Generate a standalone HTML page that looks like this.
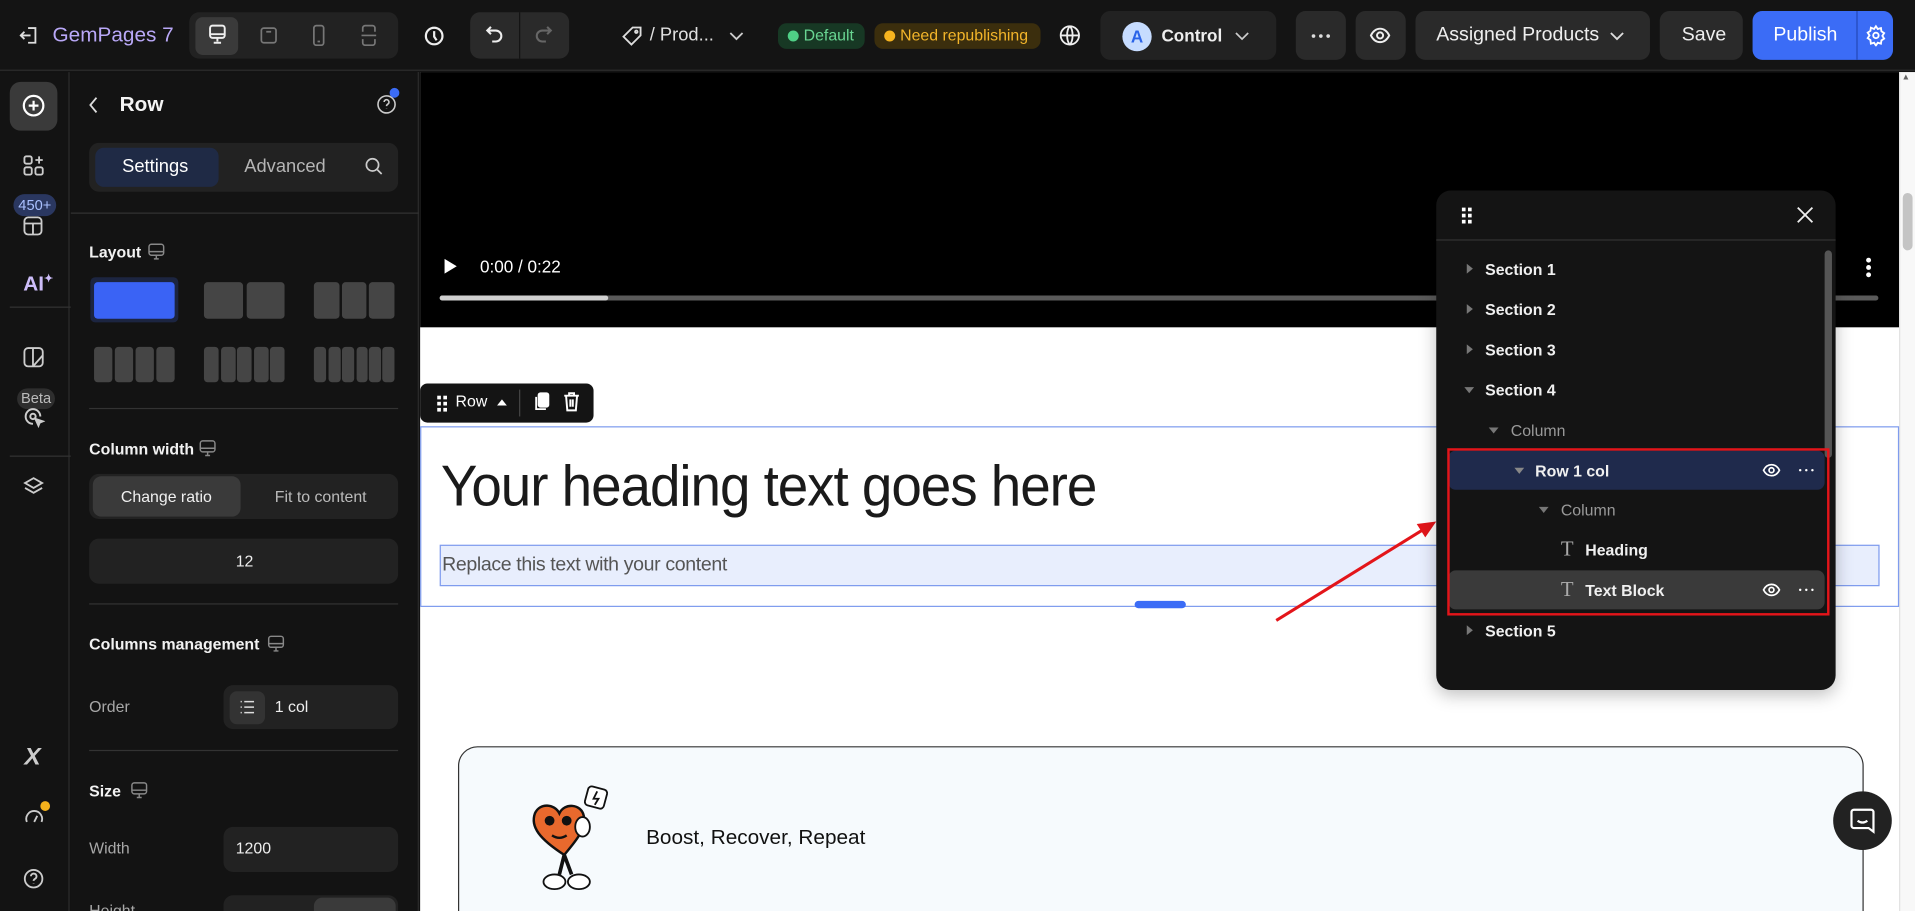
<!DOCTYPE html>
<html><head><meta charset="utf-8"><style>
*{box-sizing:border-box;margin:0;padding:0}
html,body{width:1915px;height:911px;overflow:hidden;background:#111}
#w{position:absolute;left:0;top:0;width:1568px;height:746px;overflow:hidden;transform:scale(1.22130);transform-origin:0 0;font-family:"Liberation Sans",sans-serif;color:#fff;background:#131313}
.a{position:absolute}
.t{position:absolute;white-space:nowrap}
.btn{position:absolute;background:#262626;border-radius:8px}
.ic{position:absolute}
.lbl{font-size:13px;font-weight:bold;color:#f2f2f2}
.gr{color:#a8a8a8;font-size:13px}
.tile{position:absolute;background:#454545;border-radius:3px}
.div{position:absolute;left:73px;width:253px;height:1px;background:#333}
.row{position:absolute;left:1186px;width:308px;height:32px;font-size:13px;font-weight:bold;color:#f0f0f0}
.row span{position:absolute;top:9px}
.tri{position:absolute;width:0;height:0}
</style></head><body><div id="w">
<!-- top bar -->
<div class="a" style="left:0;top:0;width:1568px;height:58px;background:#141414;border-bottom:1px solid #2c2c2c"></div>
<svg class="ic" style="left:16px;top:21px" width="16" height="16" viewBox="0 0 16 16" fill="none" stroke="#ddd" stroke-width="1.5"><path d="M7 2h6v12H7M1 8h8M4 5L1 8l3 3"/></svg>
<div class="t" style="left:43px;top:19px;font-size:17px;color:#b9a8f7">GemPages 7</div>
<div class="a" style="left:155px;top:10px;width:171px;height:38px;background:#222;border-radius:8px"></div>
<div class="a" style="left:160px;top:14px;width:35px;height:31px;background:#3a3a3a;border-radius:6px"></div>
<svg class="ic" style="left:170px;top:20px" width="16" height="18" viewBox="0 0 16 18" fill="none" stroke="#eee" stroke-width="1.6"><rect x="2" y="1" width="12" height="10" rx="2"/><path d="M2 8h12M8 11v3M5 15h6"/></svg>
<svg class="ic" style="left:212px;top:21px" width="16" height="16" viewBox="0 0 16 16" fill="none" stroke="#777" stroke-width="1.4"><rect x="2" y="2" width="12" height="12" rx="2"/><path d="M6 5h4"/></svg>
<svg class="ic" style="left:255px;top:20px" width="12" height="18" viewBox="0 0 12 18" fill="none" stroke="#777" stroke-width="1.4"><rect x="2" y="1" width="8" height="16" rx="2"/><path d="M5 14h2"/></svg>
<svg class="ic" style="left:294px;top:20px" width="16" height="18" viewBox="0 0 16 18" fill="none" stroke="#777" stroke-width="1.4"><path d="M3 6V3a2 2 0 012-2h6a2 2 0 012 2v3M3 12v3a2 2 0 002 2h6a2 2 0 002-2v-3M2 9h12"/></svg>
<svg class="ic" style="left:347px;top:21px" width="17" height="17" viewBox="0 0 17 17" fill="none" stroke="#eee" stroke-width="1.8"><circle cx="8.5" cy="8.5" r="6.8"/><path d="M8.5 4.5v4.5l2 3"/></svg>
<div class="a" style="left:385px;top:10px;width:81px;height:38px;background:#2a2a2a;border-radius:8px"></div>
<div class="a" style="left:425px;top:10px;width:1px;height:38px;background:#141414"></div>
<svg class="ic" style="left:397px;top:20px" width="16" height="18" viewBox="0 0 16 18" fill="none" stroke="#eee" stroke-width="1.7"><path d="M5 2L2 5l3 3M2 5h7a4.5 4.5 0 010 9H6"/></svg>
<svg class="ic" style="left:437px;top:20px" width="16" height="18" viewBox="0 0 16 18" fill="none" stroke="#666" stroke-width="1.7"><path d="M11 2l3 3-3 3M14 5H7a4.5 4.5 0 000 9h3"/></svg>
<svg class="ic" style="left:509px;top:21px" width="17" height="17" viewBox="0 0 17 17" fill="none" stroke="#ddd" stroke-width="1.5"><path d="M9 1.5h6.5V8L8 15.5 1.5 9z"/><circle cx="12" cy="5" r="1"/></svg>
<div class="t" style="left:532px;top:20px;font-size:15px;color:#e0e0e0">/ Prod...</div>
<svg class="ic" style="left:596px;top:26px" width="14" height="8" viewBox="0 0 14 8" fill="none" stroke="#ccc" stroke-width="1.5"><path d="M2 1l5 5 5-5"/></svg>
<div class="a" style="left:637px;top:19px;width:71px;height:21px;background:#173824;border-radius:7px"></div>
<div class="a" style="left:645px;top:25px;width:9px;height:9px;border-radius:50%;background:#4fcf86"></div>
<div class="t" style="left:658px;top:21px;font-size:13px;color:#69d592">Default</div>
<div class="a" style="left:716px;top:19px;width:136px;height:21px;background:#3b2e0d;border-radius:7px"></div>
<div class="a" style="left:724px;top:25px;width:9px;height:9px;border-radius:50%;background:#f6b41f"></div>
<div class="t" style="left:737px;top:21px;font-size:13px;color:#f3b52a">Need republishing</div>
<svg class="ic" style="left:867px;top:20px" width="18" height="18" viewBox="0 0 18 18" fill="none" stroke="#eee" stroke-width="1.5"><circle cx="9" cy="9" r="7.5"/><path d="M1.5 9h15M9 1.5c-3 3-3 12 0 15M9 1.5c3 3 3 12 0 15"/></svg>
<div class="btn" style="left:901px;top:9px;width:144px;height:40px;background:#222"></div>
<div class="a" style="left:919px;top:18px;width:24px;height:24px;border-radius:50%;background:#c6dcff;color:#2a63e8;font-size:14px;font-weight:bold;text-align:center;line-height:24px">A</div>
<div class="t" style="left:951px;top:21px;font-size:14px;font-weight:bold;color:#eee">Control</div>
<svg class="ic" style="left:1011px;top:26px" width="12" height="8" viewBox="0 0 12 8" fill="none" stroke="#ccc" stroke-width="1.4"><path d="M1 1l5 5 5-5"/></svg>
<div class="btn" style="left:1061px;top:9px;width:41px;height:40px;background:#2a2a2a"></div>
<div class="a" style="left:1074px;top:28px;width:3px;height:3px;border-radius:50%;background:#ddd;box-shadow:6px 0 #ddd,12px 0 #ddd"></div>
<div class="btn" style="left:1110px;top:9px;width:41px;height:40px;background:#2a2a2a"></div>
<svg class="ic" style="left:1121px;top:20px" width="18" height="18" viewBox="0 0 18 18" fill="none" stroke="#eee" stroke-width="1.6"><path d="M1.5 9c2-4 4.5-5.5 7.5-5.5S14.5 5 16.5 9c-2 4-4.5 5.5-7.5 5.5S3.5 13 1.5 9z"/><circle cx="9" cy="9" r="2.5"/></svg>
<div class="btn" style="left:1159px;top:9px;width:192px;height:40px;background:#2a2a2a"></div>
<div class="t" style="left:1176px;top:20px;font-size:16px;color:#eee">Assigned Products</div>
<svg class="ic" style="left:1317px;top:26px" width="14" height="8" viewBox="0 0 14 8" fill="none" stroke="#ddd" stroke-width="1.5"><path d="M2 1l5 5 5-5"/></svg>
<div class="btn" style="left:1359px;top:9px;width:68px;height:40px;background:#2a2a2a"></div>
<div class="t" style="left:1377px;top:20px;font-size:16px;color:#eee">Save</div>
<div class="a" style="left:1435px;top:9px;width:115px;height:40px;background:#3b6cf6;border-radius:8px"></div>
<div class="a" style="left:1520px;top:9px;width:1px;height:40px;background:#2449b8"></div>
<div class="t" style="left:1452px;top:20px;font-size:16px;color:#fff">Publish</div>
<svg class="ic" style="left:1527px;top:20px" width="18" height="18" viewBox="0 0 24 24" fill="none" stroke="#fff" stroke-width="2"><circle cx="12" cy="12" r="3"/><path d="M12 2l2 3 3.5-1 .5 3.5 3 2-2 3 2 3-3 2-.5 3.5-3.5-1-2 3-2-3-3.5 1L6 17l-3-2 2-3-2-3 3-2 .5-3.5L10 5z"/></svg>

<!-- left rail -->
<div class="a" style="left:0;top:59px;width:57px;height:687px;background:#131313;border-right:1px solid #2c2c2c"></div>
<div class="a" style="left:8px;top:67px;width:39px;height:40px;background:#3a3a3a;border-radius:9px"></div>
<svg class="ic" style="left:18px;top:77px" width="19" height="19" viewBox="0 0 19 19" fill="none" stroke="#fff" stroke-width="1.8"><circle cx="9.5" cy="9.5" r="8"/><path d="M9.5 5.5v8M5.5 9.5h8"/></svg>
<svg class="ic" style="left:19px;top:127px" width="17" height="17" viewBox="0 0 17 17" fill="none" stroke="#ccc" stroke-width="1.5"><rect x="1" y="1" width="6" height="6" rx="1.5"/><rect x="1" y="10" width="6" height="6" rx="1.5"/><rect x="10" y="10" width="6" height="6" rx="1.5"/><path d="M13 1v6M10 4h6"/></svg>
<div class="a" style="left:11px;top:159px;width:35px;height:18px;border-radius:9px;background:#2a3760;color:#a9c0ff;font-size:12px;text-align:center;line-height:18px">450+</div>
<svg class="ic" style="left:19px;top:177px" width="16" height="16" viewBox="0 0 16 16" fill="none" stroke="#ccc" stroke-width="1.5"><rect x="1" y="1" width="14" height="14" rx="3"/><path d="M1 6h14M8 6v9"/></svg>
<div class="t" style="left:19px;top:223px;font-size:17px;font-weight:bold;color:#cdbdf9">AI<span style="font-size:9px;vertical-align:top">✦</span></div>
<div class="a" style="left:8px;top:251px;width:50px;height:1px;background:#333"></div>
<svg class="ic" style="left:19px;top:284px" width="17" height="17" viewBox="0 0 17 17" fill="none" stroke="#ccc" stroke-width="1.5"><rect x="1" y="1" width="15" height="15" rx="3"/><path d="M8 1v15M8 16l8-9"/></svg>
<div class="a" style="top:318px;height:17px;border-radius:9px;background:#2e2e2e;color:#bbb;font-size:12px;text-align:center;line-height:17px;left:14px;width:31px">Beta</div>
<svg class="ic" style="left:19px;top:333px" width="18" height="18" viewBox="0 0 18 18" fill="none" stroke="#ccc" stroke-width="1.6"><path d="M14 8A6 6 0 108 14"/><circle cx="8" cy="8" r="2.2"/><path d="M10 10l6 2-2.5 1-1 2.5z" fill="#ccc"/></svg>
<div class="a" style="left:8px;top:373px;width:50px;height:1px;background:#333"></div>
<svg class="ic" style="left:19px;top:390px" width="17" height="17" viewBox="0 0 17 17" fill="none" stroke="#ccc" stroke-width="1.5"><path d="M8.5 1.5l7 4-7 4-7-4z"/><path d="M1.5 9.5l7 4 7-4"/></svg>
<div class="t" style="left:20px;top:609px;font-size:20px;font-weight:bold;color:#ccc;font-style:italic">X</div>
<svg class="ic" style="left:20px;top:661px" width="16" height="14" viewBox="0 0 16 14" fill="none" stroke="#ccc" stroke-width="1.5"><path d="M2 12A6.5 6.5 0 1114 12M8 12l2.5-5"/></svg>
<div class="a" style="left:33px;top:656px;width:8px;height:8px;border-radius:50%;background:#f5b21c"></div>
<svg class="ic" style="left:19px;top:711px" width="17" height="17" viewBox="0 0 17 17" fill="none" stroke="#ccc" stroke-width="1.5"><circle cx="8.5" cy="8.5" r="7.2"/><path d="M6.3 6.5a2.3 2.3 0 114 1.6c-.9.7-1.8 1-1.8 2.2M8.5 12.5v.3"/></svg>

<!-- settings panel -->
<div class="a" style="left:58px;top:59px;width:285px;height:687px;background:#131313;border-right:1px solid #2c2c2c"></div>
<svg class="ic" style="left:72px;top:79px" width="10" height="14" viewBox="0 0 10 14" fill="none" stroke="#ddd" stroke-width="1.5"><path d="M7 1L2 7l5 6"/></svg>
<div class="t" style="left:98px;top:76px;font-size:17px;font-weight:bold;color:#f4f4f4">Row</div>
<svg class="ic" style="left:308px;top:77px" width="17" height="17" viewBox="0 0 17 17" fill="none" stroke="#ccc" stroke-width="1.3"><circle cx="8.5" cy="8.5" r="7"/><path d="M6.5 6.5a2 2 0 113.5 1.4c-.8.6-1.5.9-1.5 2M8.5 12v.3"/></svg>
<div class="a" style="left:319px;top:72px;width:8px;height:8px;border-radius:50%;background:#3b6cf6"></div>
<div class="a" style="left:73px;top:117px;width:253px;height:40px;background:#222;border-radius:8px"></div>
<div class="a" style="left:78px;top:121px;width:101px;height:32px;background:#1f2a45;border-radius:7px"></div>
<div class="t" style="left:100px;top:128px;font-size:15px;color:#fff">Settings</div>
<div class="t" style="left:200px;top:128px;font-size:15px;color:#b5b5b5">Advanced</div>
<svg class="ic" style="left:298px;top:128px" width="16" height="16" viewBox="0 0 16 16" fill="none" stroke="#ccc" stroke-width="1.4"><circle cx="7" cy="7" r="5"/><path d="M11 11l3.5 3.5"/></svg>
<div class="a" style="left:58px;top:174px;width:285px;height:1px;background:#333"></div>
<div class="t lbl" style="left:73px;top:199px">Layout</div>
<svg class="ic" style="left:121px;top:199px" width="14" height="14" viewBox="0 0 14 14" fill="none" stroke="#888" stroke-width="1.2"><rect x="1" y="1" width="12" height="9" rx="2"/><path d="M1 7h12M5 13h4M7 10v3"/></svg>
<div class="a" style="left:74px;top:227px;width:72px;height:37px;border-radius:4px;background:#1c2541"></div>
<div class="a" style="left:77px;top:231px;width:66px;height:30px;border-radius:3px;background:#3a63f5"></div>
<div class="tile" style="left:167px;top:231px;width:32px;height:30px"></div><div class="tile" style="left:202px;top:231px;width:31px;height:30px"></div>
<div class="tile" style="left:257px;top:231px;width:21px;height:30px"></div><div class="tile" style="left:280px;top:231px;width:20px;height:30px"></div><div class="tile" style="left:302px;top:231px;width:21px;height:30px"></div>
<div class="tile" style="left:77px;top:284px;width:15px;height:29px"></div><div class="tile" style="left:94px;top:284px;width:15px;height:29px"></div><div class="tile" style="left:111px;top:284px;width:15px;height:29px"></div><div class="tile" style="left:128px;top:284px;width:15px;height:29px"></div>
<div class="tile" style="left:167px;top:284px;width:12px;height:29px"></div><div class="tile" style="left:181px;top:284px;width:12px;height:29px"></div><div class="tile" style="left:194px;top:284px;width:12px;height:29px"></div><div class="tile" style="left:208px;top:284px;width:12px;height:29px"></div><div class="tile" style="left:221px;top:284px;width:12px;height:29px"></div>
<div class="tile" style="left:257px;top:284px;width:10px;height:29px"></div><div class="tile" style="left:269px;top:284px;width:10px;height:29px"></div><div class="tile" style="left:280px;top:284px;width:10px;height:29px"></div><div class="tile" style="left:292px;top:284px;width:9px;height:29px"></div><div class="tile" style="left:302px;top:284px;width:10px;height:29px"></div><div class="tile" style="left:313px;top:284px;width:10px;height:29px"></div>
<div class="div" style="top:334px"></div>
<div class="t lbl" style="left:73px;top:360px">Column width</div>
<svg class="ic" style="left:163px;top:360px" width="14" height="14" viewBox="0 0 14 14" fill="none" stroke="#888" stroke-width="1.2"><rect x="1" y="1" width="12" height="9" rx="2"/><path d="M1 7h12M5 13h4M7 10v3"/></svg>
<div class="a" style="left:73px;top:388px;width:253px;height:37px;background:#222;border-radius:8px"></div>
<div class="a" style="left:76px;top:390px;width:121px;height:33px;background:#3a3a3a;border-radius:7px"></div>
<div class="t" style="left:99px;top:399px;font-size:13px;color:#f0f0f0">Change ratio</div>
<div class="t" style="left:225px;top:399px;font-size:13px;color:#bbb">Fit to content</div>
<div class="a" style="left:73px;top:441px;width:253px;height:37px;background:#222;border-radius:8px"></div>
<div class="t" style="left:193px;top:452px;font-size:13px;color:#eee">12</div>
<div class="div" style="top:494px"></div>
<div class="t lbl" style="left:73px;top:520px">Columns management</div>
<svg class="ic" style="left:219px;top:520px" width="14" height="14" viewBox="0 0 14 14" fill="none" stroke="#888" stroke-width="1.2"><rect x="1" y="1" width="12" height="9" rx="2"/><path d="M1 7h12M5 13h4M7 10v3"/></svg>
<div class="t gr" style="left:73px;top:571px">Order</div>
<div class="a" style="left:183px;top:561px;width:143px;height:36px;background:#222;border-radius:8px"></div>
<div class="a" style="left:188px;top:566px;width:29px;height:27px;background:#333;border-radius:6px"></div>
<svg class="ic" style="left:196px;top:573px" width="13" height="12" viewBox="0 0 13 12" fill="none" stroke="#ddd" stroke-width="1.3"><path d="M1 1.5h1M1 6h1M1 10.5h1M4 1.5h8M4 6h8M4 10.5h8"/></svg>
<div class="t" style="left:225px;top:571px;font-size:13px;color:#eee">1 col</div>
<div class="div" style="top:614px"></div>
<div class="t lbl" style="left:73px;top:640px">Size</div>
<svg class="ic" style="left:107px;top:640px" width="14" height="14" viewBox="0 0 14 14" fill="none" stroke="#888" stroke-width="1.2"><rect x="1" y="1" width="12" height="9" rx="2"/><path d="M1 7h12M5 13h4M7 10v3"/></svg>
<div class="t gr" style="left:73px;top:687px">Width</div>
<div class="a" style="left:183px;top:677px;width:143px;height:37px;background:#222;border-radius:8px"></div>
<div class="t" style="left:193px;top:687px;font-size:13px;color:#eee">1200</div>
<div class="t gr" style="left:73px;top:738px">Height</div>
<div class="a" style="left:183px;top:733px;width:143px;height:20px;background:#222;border-radius:8px"></div>
<div class="a" style="left:257px;top:735px;width:67px;height:20px;background:#3a3a3a;border-radius:7px"></div>

<!-- canvas -->
<div class="a" style="left:344px;top:59px;width:1211px;height:687px;background:#fff"></div>
<div class="a" style="left:344px;top:59px;width:1211px;height:209px;background:#000"></div>
<svg class="ic" style="left:363px;top:211px" width="12" height="14" viewBox="0 0 12 14"><path d="M1 1l10 6-10 6z" fill="#fff"/></svg>
<div class="t" style="left:393px;top:210px;font-size:14px;color:#fff">0:00 / 0:22</div>
<div class="a" style="left:360px;top:242px;width:1178px;height:4px;background:#5a5a5a;border-radius:2px"></div>
<div class="a" style="left:360px;top:242px;width:138px;height:4px;background:#cfcfcf;border-radius:2px"></div>
<div class="a" style="left:1528px;top:211px;width:4px;height:4px;border-radius:50%;background:#fff;box-shadow:0 6px 0 #fff,0 12px 0 #fff"></div>
<!-- page scrollbar -->
<div class="a" style="left:1555px;top:59px;width:13px;height:687px;background:#f8f8f8;border-left:1px solid #e6e6e6"></div>
<div class="a" style="left:1558px;top:158px;width:8px;height:47px;background:#c4c4c4;border-radius:4px"></div>
<div class="t" style="left:1557px;top:60px;font-size:7px;color:#666">▲</div>
<!-- row toolbar -->
<div class="a" style="left:344px;top:314px;width:142px;height:32px;background:#141414;border-radius:6px"></div>
<div class="a" style="left:358px;top:324px;width:3px;height:3px;background:#fff;box-shadow:5px 0 #fff,0 5px #fff,5px 5px #fff,0 10px #fff,5px 10px #fff"></div>
<div class="t" style="left:373px;top:321px;font-size:13px;color:#fff">Row</div>
<div class="tri" style="left:407px;top:327px;border:4px solid transparent;border-bottom:5px solid #fff;border-top:0"></div>
<div class="a" style="left:425px;top:319px;width:1px;height:22px;background:#444"></div>
<svg class="ic" style="left:437px;top:321px" width="14" height="16" viewBox="0 0 14 16" fill="none" stroke="#fff" stroke-width="1.5"><rect x="4" y="1" width="8" height="11" rx="1.5" fill="#fff"/><path d="M2 4v10h8"/></svg>
<svg class="ic" style="left:461px;top:320px" width="14" height="17" viewBox="0 0 14 17" fill="none" stroke="#fff" stroke-width="1.6"><path d="M1 4h12M5 4V2h4v2M2.5 4l1 12h7l1-12M6 7v6M8 7v6"/></svg>
<!-- row selection -->
<div class="a" style="left:344px;top:349px;width:1211px;height:148px;border:1px solid #7f9cee"></div>
<div class="t" style="left:361px;top:370px;font-size:47px;color:#1a1a1a;letter-spacing:-0.9px;transform:scaleX(0.955);transform-origin:0 0">Your heading text goes here</div>
<div class="a" style="left:360px;top:446px;width:1179px;height:34px;background:#e8eefd;border:1px solid #7f9cee"></div>
<div class="t" style="left:362px;top:454px;font-size:16px;color:#555;letter-spacing:-0.3px">Replace this text with your content</div>
<div class="a" style="left:929px;top:492px;width:42px;height:6px;background:#3b6cf6;border-radius:3px"></div>
<!-- card -->
<div class="a" style="left:375px;top:611px;width:1151px;height:160px;background:#f6fafd;border:1px solid #333;border-radius:16px"></div>
<svg class="ic" style="left:432px;top:642px" width="70" height="90" viewBox="0 0 70 90"><rect x="48" y="3" width="16" height="16" rx="3" transform="rotate(15 56 11)" fill="#fff" stroke="#111" stroke-width="1.5"/><path d="M57 6l-3 6h4l-3 5" stroke="#111" fill="none" stroke-width="1.5"/><path d="M30 58C10 45 2 35 6 24c4-9 16-8 20 0 4-9 18-8 20 2 2 12-8 22-16 32z" fill="#e8692d" stroke="#111" stroke-width="2"/><circle cx="18" cy="30" r="4" fill="#111"/><circle cx="32" cy="30" r="4" fill="#111"/><path d="M20 42q6 4 12 0" stroke="#111" fill="none" stroke-width="2"/><path d="M30 58l-4 16M30 58l6 16" stroke="#111" stroke-width="3"/><ellipse cx="22" cy="80" rx="9" ry="6" fill="#fff" stroke="#111" stroke-width="1.5"/><ellipse cx="42" cy="80" rx="9" ry="6" fill="#fff" stroke="#111" stroke-width="1.5"/><ellipse cx="45" cy="35" rx="6" ry="8" fill="#fff" stroke="#111" stroke-width="1.5"/></svg>
<div class="t" style="left:529px;top:676px;font-size:17px;color:#111">Boost, Recover, Repeat</div>
<!-- chat bubble -->
<div class="a" style="left:1501px;top:648px;width:48px;height:48px;border-radius:50%;background:#222"></div>
<svg class="ic" style="left:1514px;top:661px" width="22" height="22" viewBox="0 0 22 22" fill="none" stroke="#fff" stroke-width="1.8"><path d="M4 2h14a2 2 0 012 2v16l-4-3H4a2 2 0 01-2-2V4a2 2 0 012-2z"/><path d="M7 11q4 3 8 0"/></svg>

<!-- arrow -->
<svg class="ic" style="left:1040px;top:420px" width="140" height="95" viewBox="0 0 140 95"><path d="M5 88L128 12" stroke="#e3151a" stroke-width="2.5"/><path d="M136 7l-16 2 7 11z" fill="#e3151a"/></svg>

<!-- layer panel -->
<div class="a" style="left:1176px;top:156px;width:327px;height:409px;background:#141414;border-radius:12px;box-shadow:0 4px 14px rgba(0,0,0,.25)"></div>
<div class="a" style="left:1197px;top:170px;width:3px;height:3px;background:#fff;box-shadow:5px 0 #fff,0 5px #fff,5px 5px #fff,0 10px #fff,5px 10px #fff"></div>
<svg class="ic" style="left:1471px;top:169px" width="14" height="14" viewBox="0 0 14 14" stroke="#eee" stroke-width="1.5"><path d="M1 1l12 12M13 1L1 13"/></svg>
<div class="a" style="left:1176px;top:196px;width:327px;height:1px;background:#333"></div>
<div class="a" style="left:1494px;top:205px;width:6px;height:170px;background:#555;border-radius:3px"></div>
<div class="row" style="top:204px"><div class="tri" style="left:15px;top:12px;border:4px solid transparent;border-left:5px solid #777;border-right:0"></div><span style="left:30px">Section 1</span></div>
<div class="row" style="top:237px"><div class="tri" style="left:15px;top:12px;border:4px solid transparent;border-left:5px solid #777;border-right:0"></div><span style="left:30px">Section 2</span></div>
<div class="row" style="top:270px"><div class="tri" style="left:15px;top:12px;border:4px solid transparent;border-left:5px solid #777;border-right:0"></div><span style="left:30px">Section 3</span></div>
<div class="row" style="top:303px"><div class="tri" style="left:13px;top:14px;border:4px solid transparent;border-top:5px solid #777;border-bottom:0"></div><span style="left:30px">Section 4</span></div>
<div class="row" style="top:336px;font-weight:normal;color:#999"><div class="tri" style="left:33px;top:14px;border:4px solid transparent;border-top:5px solid #777;border-bottom:0"></div><span style="left:51px">Column</span></div>
<div class="row" style="top:369px;background:#1f2a4c;border-radius:6px"><div class="tri" style="left:54px;top:14px;border:4px solid transparent;border-top:5px solid #888;border-bottom:0"></div><span style="left:71px">Row 1 col</span>
<svg style="position:absolute;left:257px;top:10px" width="15" height="12" viewBox="0 0 15 12" fill="none" stroke="#fff" stroke-width="1.4"><path d="M1 6c1.5-3 3.5-4.5 6.5-4.5S12.5 3 14 6c-1.5 3-3.5 4.5-6.5 4.5S2.5 9 1 6z"/><circle cx="7.5" cy="6" r="2"/></svg><div class="a" style="left:287px;top:15px;width:2px;height:2px;border-radius:50%;background:#fff;box-shadow:5px 0 #fff,10px 0 #fff"></div></div>
<div class="row" style="top:401px;font-weight:normal;color:#999"><div class="tri" style="left:74px;top:14px;border:4px solid transparent;border-top:5px solid #777;border-bottom:0"></div><span style="left:92px">Column</span></div>
<div class="row" style="top:434px"><span style="left:92px;font-family:'Liberation Serif',serif;font-size:17px;font-weight:normal;color:#aaa;top:6px">T</span><span style="left:112px">Heading</span></div>
<div class="row" style="top:467px;background:#3a3a3a;border-radius:6px"><span style="left:92px;font-family:'Liberation Serif',serif;font-size:17px;font-weight:normal;color:#aaa;top:6px">T</span><span style="left:112px">Text Block</span>
<svg style="position:absolute;left:257px;top:10px" width="15" height="12" viewBox="0 0 15 12" fill="none" stroke="#fff" stroke-width="1.4"><path d="M1 6c1.5-3 3.5-4.5 6.5-4.5S12.5 3 14 6c-1.5 3-3.5 4.5-6.5 4.5S2.5 9 1 6z"/><circle cx="7.5" cy="6" r="2"/></svg><div class="a" style="left:287px;top:15px;width:2px;height:2px;border-radius:50%;background:#fff;box-shadow:5px 0 #fff,10px 0 #fff"></div></div>
<div class="row" style="top:500px"><div class="tri" style="left:15px;top:12px;border:4px solid transparent;border-left:5px solid #777;border-right:0"></div><span style="left:30px">Section 5</span></div>
<div class="a" style="left:1185px;top:367px;width:313px;height:137px;border:2.5px solid #e3151a"></div>
</div></body></html>
